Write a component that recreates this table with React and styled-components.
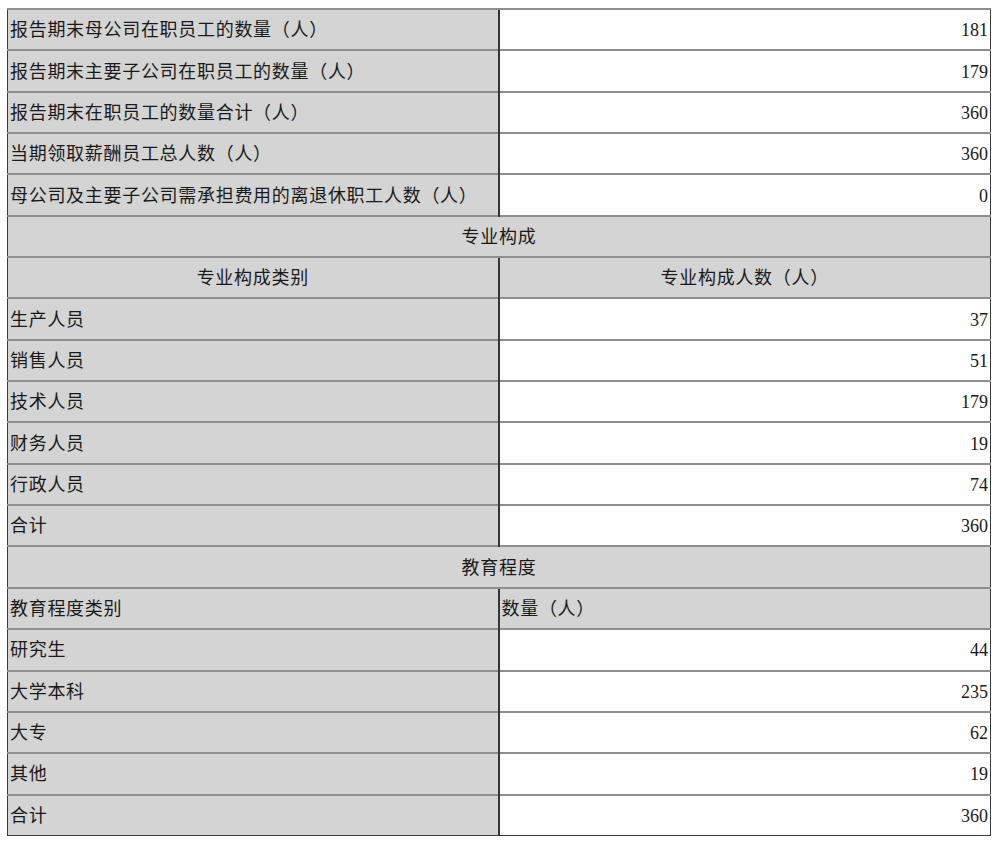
import React from "react";
import styled, { createGlobalStyle } from "styled-components";

const GlobalStyle = createGlobalStyle`
  body {
    margin: 8px 0 0 7px;
    background: #ffffff;
  }
`;

const Table = styled.table`
  width: 984px;
  border-collapse: collapse;
  table-layout: fixed;
  font-family: "Liberation Serif", "Noto Sans CJK SC", serif;
  font-size: 18px;
  color: #1a1a1a;
  border: 1px solid #3a3a3a;
`;

const Row = styled.tr`
  height: 41.35px;
`;

const Cell = styled.td`
  padding: 1px 2px 0 2px;
  border-top: 2px solid #8e8e8e;
  background: ${p => (p.$gray ? "#d4d4d4" : "#ffffff")};
  text-align: ${p => p.$align || "left"};
  letter-spacing: ${p => (p.$num ? "0" : "0.7px")};
  vertical-align: middle;
  white-space: nowrap;
  line-height: 1;
  & + & {
    border-left: 2px solid #353535;
  }
`;

const LeftCol = styled.col`
  width: 491px;
`;

const summary = [
  ["报告期末母公司在职员工的数量（人）", "181"],
  ["报告期末主要子公司在职员工的数量（人）", "179"],
  ["报告期末在职员工的数量合计（人）", "360"],
  ["当期领取薪酬员工总人数（人）", "360"],
  ["母公司及主要子公司需承担费用的离退休职工人数（人）", "0"]
];

const majors = [
  ["生产人员", "37"],
  ["销售人员", "51"],
  ["技术人员", "179"],
  ["财务人员", "19"],
  ["行政人员", "74"],
  ["合计", "360"]
];

const education = [
  ["研究生", "44"],
  ["大学本科", "235"],
  ["大专", "62"],
  ["其他", "19"],
  ["合计", "360"]
];

const DataRow = ({ label, value }) => (
  <Row>
    <Cell $gray>{label}</Cell>
    <Cell $align="right" $num>
      {value}
    </Cell>
  </Row>
);

export default function App() {
  return (
    <>
      <GlobalStyle />
      <Table>
        <colgroup>
          <LeftCol />
          <col />
        </colgroup>
        <tbody>
          {summary.map(([l, v]) => (
            <DataRow key={l} label={l} value={v} />
          ))}
          <Row>
            <Cell $gray colSpan={2} $align="center">
              专业构成
            </Cell>
          </Row>
          <Row>
            <Cell $gray $align="center">
              专业构成类别
            </Cell>
            <Cell $gray $align="center">
              专业构成人数（人）
            </Cell>
          </Row>
          {majors.map(([l, v], i) => (
            <DataRow key={"m" + i} label={l} value={v} />
          ))}
          <Row>
            <Cell $gray colSpan={2} $align="center">
              教育程度
            </Cell>
          </Row>
          <Row>
            <Cell $gray>教育程度类别</Cell>
            <Cell $gray>数量（人）</Cell>
          </Row>
          {education.map(([l, v], i) => (
            <DataRow key={"e" + i} label={l} value={v} />
          ))}
        </tbody>
      </Table>
    </>
  );
}
